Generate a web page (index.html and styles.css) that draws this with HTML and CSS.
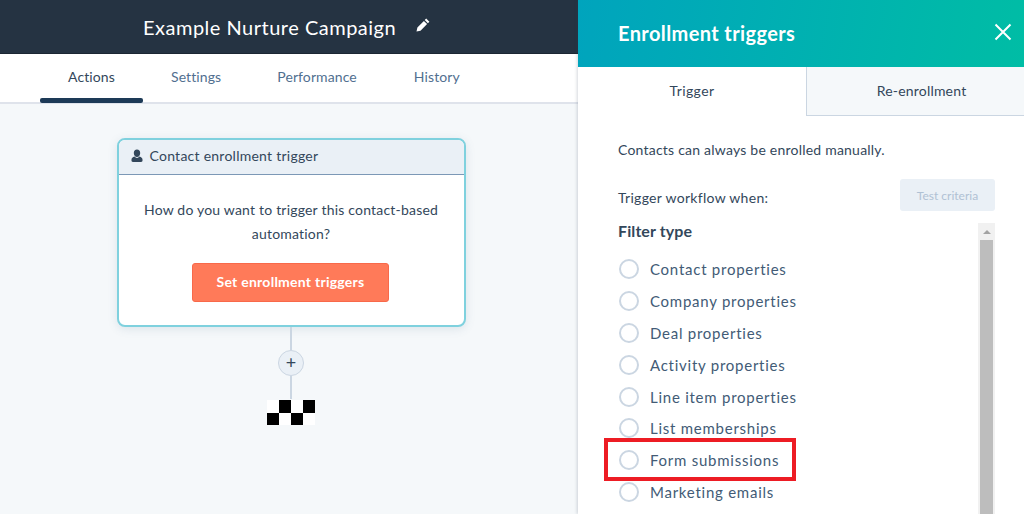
FILE: index.html
```html
<!DOCTYPE html>
<html>
<head>
    <title>Example Nurture Campaign</title>
    <link rel="stylesheet" href="styles.css">
</head>
<body>
    <div class="page">
        <div class="main">
            <div class="topbar">
                <span class="campaign-name">Example Nurture Campaign</span>
                <svg class="pencil" width="16" height="16" viewBox="0 0 16 16">
                    <path d="M11.2 1.6l3.2 3.2-1.5 1.5-3.2-3.2zM8.9 3.9l3.2 3.2-6.6 6.6-4 .9.9-4z" fill="#fff"/>
                </svg>
            </div>
            <div class="tabs">
                <div class="tab active">Actions</div>
                <div class="tab tab-settings">Settings</div>
                <div class="tab tab-performance">Performance</div>
                <div class="tab tab-history">History</div>
            </div>
            <div class="canvas">
                <div class="card">
                    <div class="card-head">
                        <svg class="contact-icon" width="14" height="14" viewBox="0 0 14 14">
                            <path d="M7 0.5c2 0 3.2 1.5 3.2 3.4S9 8 7 8 3.800 5.800 3.800 3.900 5 0.500 7 0.500zM4.600 7.600C5.200 8.500 6 9 7 9s1.800-.5 2.400-1.400c1.900.5 3.100 1.500 3.100 3v1.200c0 .7-.6 1.200-1.300 1.200H2.800c-.7 0-1.300-.5-1.300-1.200v-1.200c0-1.500 1.200-2.500 3.100-3z" fill="#33475b"/>
                        </svg>
                        Contact enrollment trigger
                    </div>
                    <div class="card-body">
                        <p class="card-text">How do you want to trigger this contact-based automation?</p>
                        <button type="button" class="orange-button">Set enrollment triggers</button>
                    </div>
                </div>
                <div class="line line-top"></div>
                <div class="plus">+</div>
                <div class="line line-bottom"></div>
                <div class="finish">
                    <span class="w"></span><span class="b"></span><span class="w"></span><span class="b"></span>
                    <span class="b"></span><span class="w"></span><span class="b"></span><span class="w"></span>
                </div>
            </div>
        </div>

        <div class="panel">
            <div class="panel-head">
                <h2>Enrollment triggers</h2>
                <svg class="close" width="18" height="18" viewBox="0 0 18 18">
                    <path d="M1.500 1.500l15 15M16.500 1.500l-15 15" stroke="#fff" stroke-width="2" fill="none"/>
                </svg>
            </div>
            <div class="panel-tabs">
                <div class="panel-tab selected">Trigger</div>
                <div class="panel-tab">Re-enrollment</div>
            </div>
            <div class="panel-body">
                <p class="note">Contacts can always be enrolled manually.</p>
                <div class="when-row">
                    <span>Trigger workflow when:</span>
                    <button type="button" class="test-button">Test criteria</button>
                </div>
                <div class="filter-area">
                    <div class="filter-list">
                        <h3>Filter type</h3>
                        <div class="radio-row"><span class="radio"></span>Contact properties</div>
                        <div class="radio-row"><span class="radio"></span>Company properties</div>
                        <div class="radio-row"><span class="radio"></span>Deal properties</div>
                        <div class="radio-row"><span class="radio"></span>Activity properties</div>
                        <div class="radio-row"><span class="radio"></span>Line item properties</div>
                        <div class="radio-row"><span class="radio"></span>List memberships</div>
                        <div class="radio-row highlighted"><span class="radio"></span>Form submissions<span class="red-box"></span></div>
                        <div class="radio-row"><span class="radio"></span>Marketing emails</div>
                    </div>
                    <div class="scrollbar">
                        <div class="scroll-up"></div>
                        <div class="scroll-thumb"></div>
                    </div>
                </div>
            </div>
        </div>
    </div>
</body>
</html>
```

FILE: styles.css
```css
html, body {
    margin: 0;
    height: 514px;
    overflow: hidden;
}

body {
    font-family: "Lato", "Open Sans", sans-serif;
    color: #33475b;
}

.page {
    display: flex;
    height: 514px;
    overflow: hidden;
}

.main {
    width: 578px;
    flex-shrink: 0;
    display: flex;
    flex-direction: column;
    background: #f5f8fa;
}

.topbar {
    height: 54px;
    box-sizing: border-box;
    padding-left: 143px;
    display: flex;
    align-items: center;
    background: #253342;
    border-bottom: 1px solid #1c2733;
    color: white;
}

.campaign-name {
    font-size: 20px;
    letter-spacing: 0.5px;
}

.pencil {
    margin-left: 19px;
    margin-top: -3px;
}

.tabs {
    height: 50px;
    box-sizing: border-box;
    display: flex;
    padding-left: 40px;
    background: white;
    border-bottom: 2px solid #dfe3eb;
    font-size: 14px;
    letter-spacing: 0.1px;
    line-height: 46px;
    color: #516f90;
}

.tab {
    text-align: center;
    position: relative;
}

.tab.active {
    width: 103px;
    color: #33475b;
}

.tab.active::after {
    content: "";
    position: absolute;
    left: 0;
    right: 0;
    bottom: -1px;
    height: 5px;
    border-radius: 2px;
    background: #1d3a57;
}

.tab-settings {
    margin-left: 28px;
}

.tab-performance {
    margin-left: 56px;
}

.tab-history {
    margin-left: 57px;
}

.canvas {
    flex: 1;
    display: flex;
    flex-direction: column;
    align-items: center;
    padding: 34px 3px 0 0;
    margin-left: 7px;
}

.card {
    width: 349px;
    height: 189px;
    box-sizing: border-box;
    flex-shrink: 0;
    background: white;
    border: 2px solid #7fd1de;
    border-radius: 8px;
    box-shadow: 0 2px 10px rgba(81, 111, 144, 0.15);
    overflow: hidden;
}

.card-head {
    height: 35px;
    box-sizing: border-box;
    display: flex;
    align-items: center;
    padding: 0 0 3px 11px;
    background: #eaf0f6;
    border-bottom: 1px solid #7c98b6;
    font-size: 14px;
    letter-spacing: 0.25px;
}

.contact-icon {
    margin-right: 6px;
}

.card-body {
    display: flex;
    flex-direction: column;
    align-items: center;
}

.card-text {
    width: 310px;
    margin: 23px 0 0 0;
    text-align: center;
    font-size: 14px;
    letter-spacing: 0.2px;
    line-height: 24px;
}

.orange-button {
    width: 197px;
    height: 39px;
    margin-top: 17px;
    margin-left: -1px;
    padding: 0 0 3px 0;
    background: #ff7a59;
    border: 1px solid #f8694a;
    border-radius: 3px;
    color: white;
    font-family: inherit;
    font-size: 14px;
    font-weight: bold;
    letter-spacing: 0.25px;
}

.line {
    width: 2px;
    background: #cbd6e2;
    flex-shrink: 0;
}

.line-top {
    height: 23px;
}

.line-bottom {
    height: 23px;
}

.plus {
    width: 26px;
    height: 26px;
    box-sizing: border-box;
    flex-shrink: 0;
    border: 1px solid #cbd6e2;
    border-radius: 50%;
    background: #eaf0f6;
    text-align: center;
    font-size: 18px;
    line-height: 22px;
}

.finish {
    display: grid;
    grid-template-columns: repeat(4, 12px);
    grid-template-rows: repeat(2, 12.5px);
    margin-top: 1px;
}

.finish .b {
    background: black;
}

.finish .w {
    background: white;
}

.panel {
    flex: 1;
    display: flex;
    flex-direction: column;
    background: white;
    box-shadow: -1px 0 3px rgba(45, 62, 80, 0.2);
    z-index: 1;
}

.panel-head {
    height: 67px;
    flex-shrink: 0;
    box-sizing: border-box;
    display: flex;
    align-items: center;
    justify-content: space-between;
    padding: 0 12px 0 40px;
    background: linear-gradient(100deg, #00a4bd, #00bda5);
    color: white;
}

.panel-head h2 {
    margin: -2px 0 0 0;
    font-size: 20px;
    font-weight: bold;
    letter-spacing: 0.39px;
}

.close {
    margin-top: -4px;
}

.panel-tabs {
    height: 49px;
    flex-shrink: 0;
    display: flex;
    font-size: 14px;
    letter-spacing: 0.2px;
    line-height: 47px;
    text-align: center;
}

.panel-tab {
    flex: 1;
    box-sizing: border-box;
    padding-left: 12px;
    background: #f5f8fa;
    border-bottom: 1px solid #cbd6e2;
}

.panel-tab.selected {
    flex: none;
    width: 229px;
    padding-left: 0;
    background: white;
    border-bottom: none;
    border-right: 1px solid #cbd6e2;
    letter-spacing: 0.4px;
}

.panel-body {
    padding: 0 29px 0 40px;
    font-size: 14px;
    letter-spacing: 0.3px;
}

.note {
    margin: 24px 0 0 0;
    line-height: 20px;
    letter-spacing: 0.22px;
}

.when-row {
    display: flex;
    justify-content: space-between;
    align-items: flex-start;
    margin-top: 19px;
    line-height: 20px;
}

.when-row span {
    margin-top: 9px;
}

.test-button {
    width: 95px;
    height: 32px;
    padding: 0;
    background: #eaf0f6;
    border: none;
    border-radius: 3px;
    color: #b0c1d4;
    font-family: inherit;
    font-size: 12px;
}

.filter-area {
    display: flex;
    justify-content: space-between;
    margin-top: 12px;
}

.filter-list h3 {
    margin: -2px 0 12px 0;
    font-size: 16px;
    font-weight: bold;
    line-height: 20px;
    letter-spacing: 0.1px;
}

.radio-row {
    position: relative;
    display: flex;
    align-items: center;
    height: 31.9px;
    margin-left: 1px;
    font-size: 15px;
    letter-spacing: 0.75px;
    color: #425b76;
}

.radio {
    width: 20px;
    height: 20px;
    box-sizing: border-box;
    margin-right: 11px;
    border: 2px solid #cbd6e2;
    border-radius: 50%;
    background: white;
}

.red-box {
    position: absolute;
    left: -15px;
    top: -6px;
    width: 192px;
    height: 43px;
    box-sizing: border-box;
    border: 4px solid #ed1c24;
}

.scrollbar {
    width: 17px;
    height: 300px;
    background: #f1f1f1;
    display: flex;
    flex-direction: column;
    align-items: center;
}

.scroll-up {
    width: 0;
    height: 0;
    margin: 7px 0 6px 0;
    border-left: 4px solid transparent;
    border-right: 4px solid transparent;
    border-bottom: 4px solid #a3a3a3;
}

.scroll-thumb {
    flex: 1;
    width: 13px;
    background: #bdbdbd;
}
```
